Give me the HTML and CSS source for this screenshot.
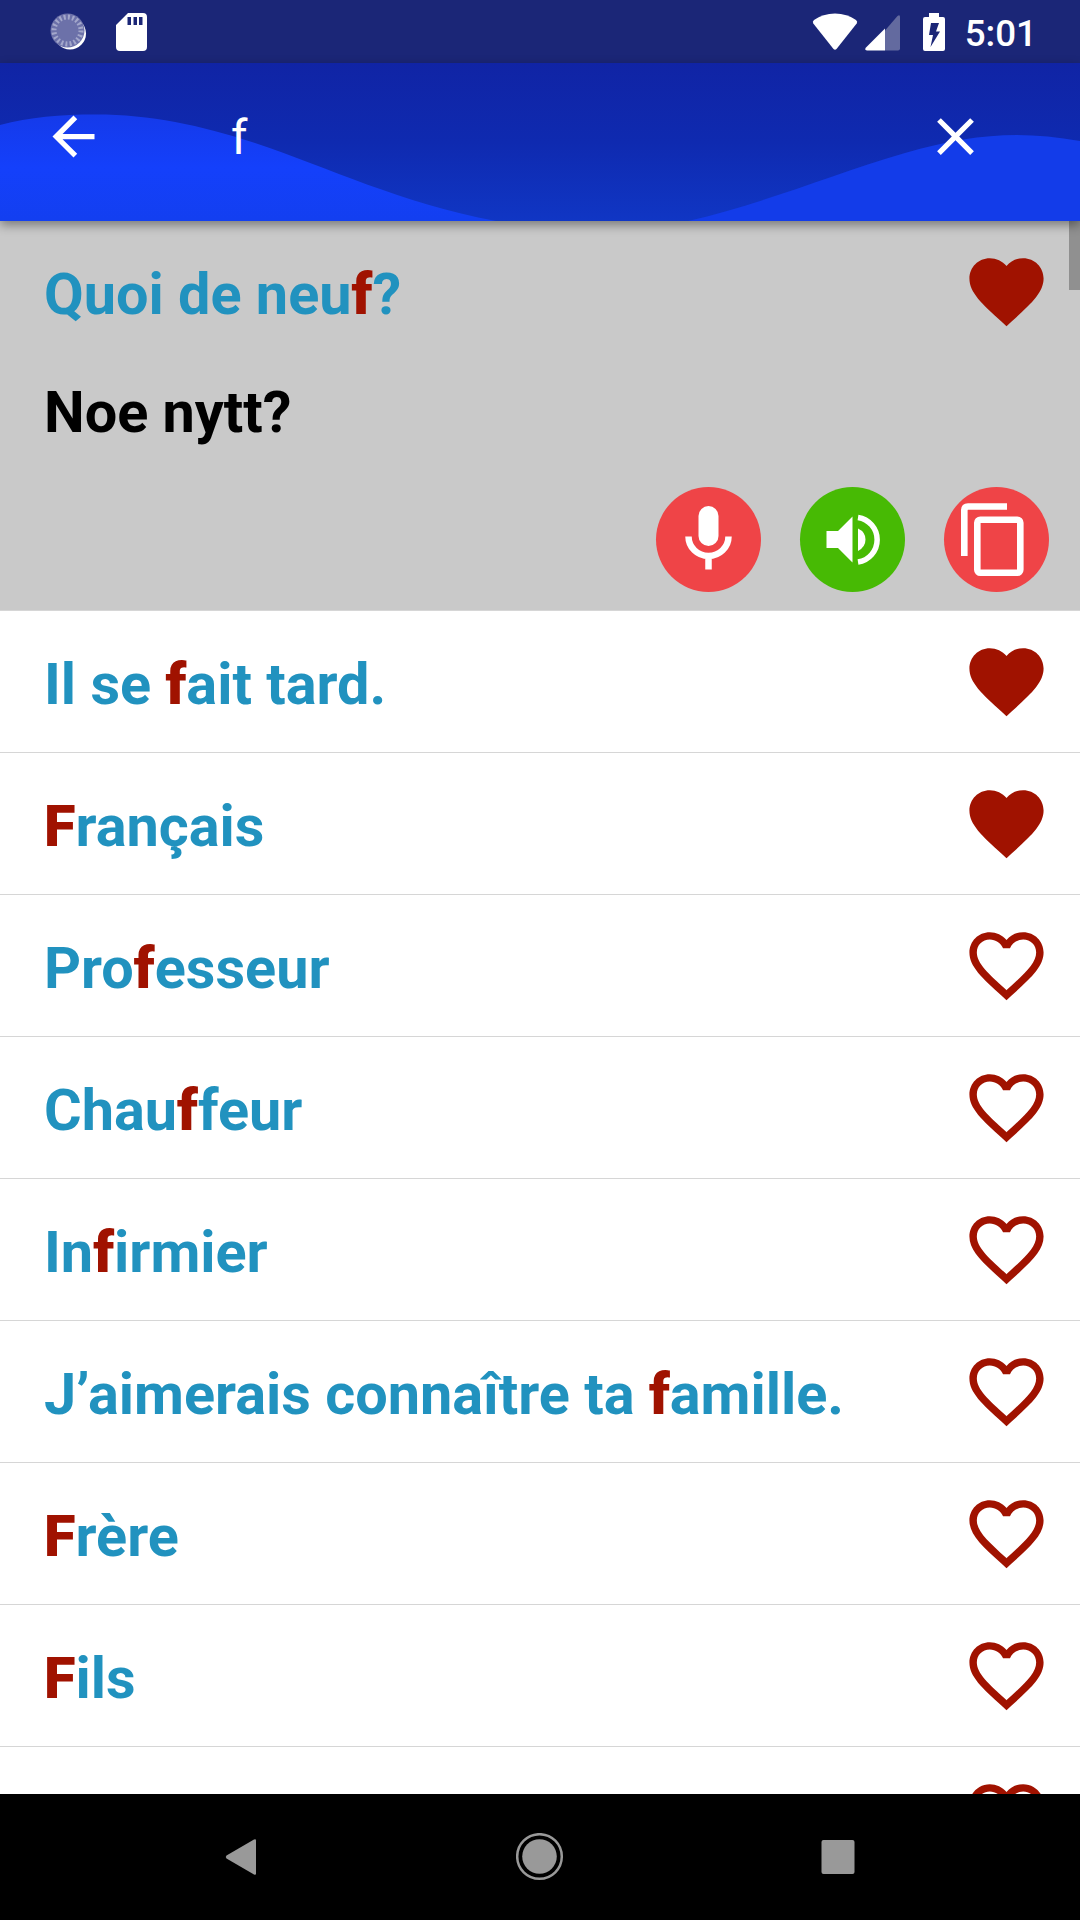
FILE: index.html
```
<!DOCTYPE html>
<html lang="fr">

<head>
    <meta charset="UTF-8">
    <title>Phrases</title>
    <link rel="stylesheet" href="styles.css">
</head>

<body>
    <!-- shared icons -->
    <svg class="defs" width="0" height="0">
        <symbol id="heart" viewBox="0 0 24 24">
            <path d="M12 21.35l-1.45-1.32C5.4 15.36 2 12.28 2 8.5 2 5.42 4.42 3 7.5 3c1.74 0 3.41.81 4.5 2.09C13.09 3.81 14.76 3 16.5 3 19.58 3 22 5.42 22 8.5c0 3.78-3.4 6.86-8.55 11.54L12 21.35z"/>
        </symbol>
        <symbol id="heart-empty" viewBox="0 0 24 24">
            <path d="M16.5 3c-1.74 0-3.41.81-4.5 2.09C10.91 3.81 9.24 3 7.5 3 4.42 3 2 5.42 2 8.5c0 3.78 3.4 6.86 8.55 11.54L12 21.35l1.45-1.32C18.6 15.36 22 12.28 22 8.5 22 5.42 19.58 3 16.5 3zm-4.4 15.55l-.1.1-.1-.1C7.14 14.24 4 11.39 4 8.5 4 6.5 5.5 5 7.5 5c1.54 0 3.04.99 3.57 2.36h1.87C13.46 5.99 14.96 5 16.5 5c2 0 3.5 1.5 3.5 3.5 0 2.89-3.14 5.74-7.9 10.05z"/>
        </symbol>
    </svg>

    <div class="status-bar">
        <svg class="spinner" width="38" height="38" viewBox="0 0 38 38">
            <circle cx="20" cy="20.5" r="16" fill="#fff"/>
            <circle cx="17.5" cy="17.5" r="17" fill="#6c71a9"/>
            <circle cx="17.5" cy="17.5" r="13.5" fill="none" stroke="#a3a7cb" stroke-width="5" stroke-dasharray="2 2.24"/>
        </svg>
        <svg class="sd-card" width="31" height="38" viewBox="0 0 31 38">
            <path fill="#fff" fill-rule="evenodd" d="M12 0H27q4 0 4 4V34q0 4-4 4H4q-4 0-4-4V12zM11.5 4v8h3.5v-8zM17.5 4v8h3.5v-8zM23 4v8h3.5v-8z"/>
        </svg>
        <div class="status-right">
            <svg class="wifi" width="46" height="38" viewBox="0 0 46 38">
                <path fill="#fff" d="M1.3 10.5Q0 8.5 2 7Q11 .5 23 .5T44 7Q46 8.5 44.7 10.5L24.5 36Q23 37.5 21.5 36z"/>
            </svg>
            <svg class="signal" width="36" height="36" viewBox="0 0 36 36">
                <path fill="#636a9f" d="M20 15.5L32.5 1Q35 -1 35 2V33.5Q35 35.5 33 35.5H20z"/>
                <path fill="#fff" d="M20 13.5V35.5H2Q-1 35 1 32.5z"/>
            </svg>
            <svg class="battery" width="22" height="38" viewBox="0 0 22 38">
                <path fill="#fff" fill-rule="evenodd" d="M6 0H16V4H20q2 0 2 2V36q0 2-2 2H2q-2 0-2-2V6q0-2 2-2H6zM8 10L6 22H10L7.5 34L17 18.5H13L16 10z"/>
            </svg>
            <span class="clock">5:01</span>
        </div>
    </div>

    <header class="search-bar">
        <svg class="waves" width="1080" height="158" viewBox="0 63 1080 158">
            <defs>
                <linearGradient id="wave" x1="0" y1="0" x2="0" y2="1">
                    <stop offset="0" stop-color="#153aea"/>
                    <stop offset=".5" stop-color="#1440fb"/>
                    <stop offset="1" stop-color="#133ff0"/>
                </linearGradient>
            </defs>
            <path fill="url(#wave)" d="M0 125C30 117 60 114.5 96 114.5C150 114.5 200 125 255 143C330 168 400 203 496 221H0z"/>
            <path fill="#133ce9" d="M688 221C760 205 830 175 905 153C970 134 1020 130 1080 141V221z"/>
        </svg>
        <svg class="back" width="63" height="63" viewBox="0 0 24 24">
            <path fill="#fff" d="M20 11H7.83l5.59-5.59L12 4l-8 8 8 8 1.41-1.41L7.83 13H20v-2z"/>
        </svg>
        <span class="query">f</span>
        <svg class="close" width="63" height="63" viewBox="0 0 24 24">
            <path fill="#fff" d="M19 6.41L17.59 5 12 10.59 6.41 5 5 6.41 10.59 12 5 17.59 6.41 19 12 13.41 17.59 19 19 17.59 13.41 12z"/>
        </svg>
    </header>

    <main class="list">
        <div class="scrollbar"></div>
        <section class="opened">
            <div class="row">
                <p>Quoi de neu<b>f</b>?</p>
                <svg class="heart"><use href="#heart"/></svg>
            </div>
            <p class="translation">Noe nytt?</p>
            <div class="actions">
                <span class="round red">
                    <svg width="105" height="105" viewBox="0 0 105 105">
                        <rect x="42.5" y="19" width="20" height="40" rx="10" fill="#fff"/>
                        <path d="M32.5 49.5a20 19.5 0 0 0 40 0M52.5 68V82.5" fill="none" stroke="#fff" stroke-width="6.5"/>
                    </svg>
                </span>
                <span class="round green">
                    <svg width="105" height="105" viewBox="0 0 105 105">
                        <path fill="#fff" d="M26.5 44H38L52.5 29.5V75.5L38 61H26.5zM58 41.5Q65.5 45 65.5 52.5T58 64z"/>
                        <path d="M58 30.5a22.5 22.5 0 0 1 0 44.5" fill="none" stroke="#fff" stroke-width="5.5"/>
                    </svg>
                </span>
                <span class="round red">
                    <svg width="105" height="105" viewBox="0 0 105 105">
                        <path d="M63 19.5H24Q20.3 19.5 20.3 23.5V69" fill="none" stroke="#fff" stroke-width="6.6"/>
                        <rect x="33.3" y="32.7" width="43" height="53" rx="3" fill="none" stroke="#fff" stroke-width="6.6"/>
                    </svg>
                </span>
            </div>
        </section>
        <div class="row">
            <p>Il se <b>f</b>ait tard.</p>
            <svg class="heart"><use href="#heart"/></svg>
        </div>
        <div class="row">
            <p><b>F</b>rançais</p>
            <svg class="heart"><use href="#heart"/></svg>
        </div>
        <div class="row">
            <p>Pro<b>f</b>esseur</p>
            <svg class="heart"><use href="#heart-empty"/></svg>
        </div>
        <div class="row">
            <p>Chau<b>f</b>feur</p>
            <svg class="heart"><use href="#heart-empty"/></svg>
        </div>
        <div class="row">
            <p>In<b>f</b>irmier</p>
            <svg class="heart"><use href="#heart-empty"/></svg>
        </div>
        <div class="row">
            <p>J’aimerais connaître ta <b>f</b>amille.</p>
            <svg class="heart"><use href="#heart-empty"/></svg>
        </div>
        <div class="row">
            <p><b>F</b>rère</p>
            <svg class="heart"><use href="#heart-empty"/></svg>
        </div>
        <div class="row">
            <p><b>F</b>ils</p>
            <svg class="heart"><use href="#heart-empty"/></svg>
        </div>
        <div class="row">
            <p></p>
            <svg class="heart"><use href="#heart-empty"/></svg>
        </div>
    </main>

    <nav class="nav-bar">
        <svg width="48" height="48" viewBox="0 0 48 48">
            <path fill="#999" d="M8.5 22.5Q7 24 8.5 25.5L36 41.5Q38 42.5 38 40.5V7.5Q38 5.5 36 6.5z"/>
        </svg>
        <svg width="48" height="48" viewBox="0 0 48 48">
            <circle cx="23.5" cy="23.5" r="22.3" fill="none" stroke="#999" stroke-width="2.5"/>
            <circle cx="23.5" cy="23.5" r="17.3" fill="#999"/>
        </svg>
        <svg width="48" height="48" viewBox="0 0 48 48">
            <rect x="7.5" y="7" width="33" height="34" rx="2" fill="#999"/>
        </svg>
    </nav>
</body>

</html>
```
FILE: styles.css
```
* {
    box-sizing: border-box;
}

body {
    margin: 0;
    width: 1080px;
    height: 1920px;
    display: flex;
    flex-direction: column;
    overflow: hidden;
    background-color: white;
    font-family: Roboto, sans-serif;
}

svg {
    display: block;
    flex-shrink: 0;
}

p {
    margin: 0;
}

.defs {
    position: absolute;
}

.status-bar {
    height: 63px;
    padding: 0 43px 0 50px;
    display: flex;
    align-items: center;
    background-color: #1b2677;
    color: white;
}

.sd-card {
    margin-left: 28px;
}

.status-right {
    margin-left: auto;
    display: flex;
    align-items: center;
}

.signal {
    margin-left: 7px;
    margin-top: 2px;
}

.battery {
    margin-left: 22px;
}

.clock {
    margin-left: 20px;
    padding-top: 4px;
    font-size: 36.75px;
    font-weight: 500;
    line-height: 44px;
}

.search-bar {
    position: relative;
    z-index: 2;
    height: 158px;
    padding: 0 93px 0 42px;
    display: flex;
    align-items: center;
    flex-shrink: 0;
    background: linear-gradient(#1024a5, #0f2ab0 50%, #1036c4);
    box-shadow: 0 4px 10px rgba(0, 0, 0, 0.4);
    color: white;
}

.waves {
    position: absolute;
    top: 0;
    left: 0;
}

.back,
.query,
.close {
    position: relative;
}

.back,
.close {
    margin-top: -11px;
}

.query {
    margin-left: 126px;
    margin-top: -8px;
    font-size: 47.25px;
}

.close {
    margin-left: auto;
}

.list {
    position: relative;
    flex: 1;
    min-height: 0;
    overflow: hidden;
    font-size: 57.6px;
    font-weight: bold;
    color: #2192bf;
}

.list b {
    color: #a01200;
}

.scrollbar {
    position: absolute;
    top: 0;
    right: 0;
    width: 11px;
    height: 69px;
    background-color: #909090;
}

.row {
    height: 142px;
    padding: 0 29px 0 44px;
    display: flex;
    justify-content: space-between;
    align-items: center;
    border-bottom: 1px solid #d6d6d6;
}

.row p {
    padding-top: 6px;
}

.heart {
    width: 89px;
    height: 89px;
    margin-top: -1px;
    fill: #a01200;
}

.opened {
    height: 390px;
    background-color: #c9c9c9;
    border-bottom: 1px solid #d6d6d6;
}

.opened .row {
    height: 141px;
    border-bottom: none;
}

.translation {
    padding-left: 44px;
    line-height: 68px;
    margin-top: 17px;
    color: black;
}

.actions {
    display: flex;
    justify-content: flex-end;
    gap: 39px;
    margin-top: 40px;
    padding-right: 31px;
}

.round {
    width: 105px;
    height: 105px;
    border-radius: 50%;
}

.red {
    background-color: #ef4447;
}

.green {
    background-color: #47ba04;
}

.nav-bar {
    height: 126px;
    padding: 0 218px;
    display: flex;
    justify-content: space-between;
    align-items: center;
    background-color: black;
}
```
